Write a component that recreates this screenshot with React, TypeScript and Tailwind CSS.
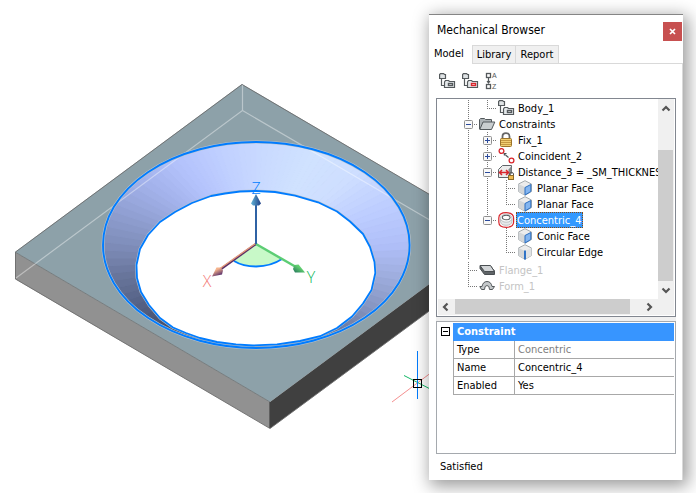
import React from "react";

const FONT = "font-['DejaVu_Sans_Condensed','DejaVu_Sans',sans-serif]";

/* ---------- model view ---------- */

type Stop = [number, number, number, number];

// Shading of the conic face, by clock angle in degrees.
const SHADE: Stop[] = [
  [0, 200, 216, 255],
  [30, 208, 226, 255],
  [50, 206, 222, 255],
  [70, 188, 204, 255],
  [85, 176, 191, 248],
  [100, 155, 170, 218],
  [115, 132, 147, 190],
  [130, 108, 122, 160],
  [145, 84, 96, 124],
  [180, 64, 72, 94],
  [230, 66, 76, 100],
  [248, 84, 97, 132],
  [262, 103, 116, 154],
  [275, 126, 140, 184],
  [290, 146, 161, 212],
  [305, 164, 179, 236],
  [322, 180, 195, 252],
  [340, 191, 207, 255],
  [360, 200, 216, 255],
];

function shadeAt(angle: number) {
  const i = Math.max(1, SHADE.findIndex((s) => s[0] >= angle));
  const a = SHADE[i - 1];
  const b = SHADE[i];
  const t = (angle - a[0]) / (b[0] - a[0]);
  const mix = (k: 1 | 2 | 3) => Math.round(a[k] + (b[k] - a[k]) * t);
  return `rgb(${mix(1)},${mix(2)},${mix(3)})`;
}

const wedges = Array.from({ length: 120 }, (_, i) => {
  const point = (deg: number) => {
    const r = (deg * Math.PI) / 180;
    return `${256 + 260 * Math.sin(r)},${258 - 260 * Math.cos(r)}`;
  };
  return { points: `256,258 ${point(i * 3)} ${point(i * 3 + 3)}`, fill: shadeAt(i * 3 + 1.5) };
});

const INNER =
  "256,191 240,191.5 225,193.5 211,196 192,203 175,212 160,222 148,235 140,249 136.5,265 137,278 141,292 149,305 160,318 173,327.5 186,333 200,338 217,342 236,344.3 253,345.5 277,344.3 300,341 320,336.2 337,328 352,316.5 363,303.5 371.5,290 375.3,273 374.5,262 370,247 363,234 350,221.5 337,211.5 318,202.3 295,195.7 275,192";

function ModelView() {
  return (
    <svg
      className="absolute left-0 top-0"
      width="696"
      height="493"
      viewBox="0 0 696 493"
      role="img"
      aria-label="Plate with conic hole"
    >
      <defs>
        <clipPath id="rim">
          <ellipse cx="256.300" cy="245" rx="153.300" ry="103" />
        </clipPath>
        <linearGradient id="zHead">
          <stop offset="0" stopColor="#62b4d8" />
          <stop offset="1" stopColor="#1f3f86" />
        </linearGradient>
        <linearGradient id="xHead" x1="0" y1="0" x2="0.6" y2="1">
          <stop offset="0.35" stopColor="#f6b48c" />
          <stop offset="1" stopColor="#4c2468" />
        </linearGradient>
        <linearGradient id="yHead" x1="0" y1="1" x2="1" y2="0">
          <stop offset="0" stopColor="#1f6f5a" />
          <stop offset="0.6" stopColor="#62d070" />
        </linearGradient>
      </defs>
      <polygon points="15,252 242,84 497,234 270,402" fill="#8da1a9" />
      <polygon points="15,252 270,402 270,428.500 15,279" fill="#919191" />
      <polygon points="270,402 497,234 497,261 270,428.500" fill="#404040" />
      <polygon
        points="15.500,279 15.500,252 242,84.500 497,234 497,261 270,428.500"
        fill="none"
        stroke="#6d6d6d"
        strokeWidth="0.900"
      />
      <path d="M15 252L270 402" stroke="#6f7678" strokeWidth="0.900" />
      <path d="M269.500 402V428" stroke="#5f5f5f" />
      <g clipPath="url(#rim)">
        {wedges.map((w, i) => (
          <polygon key={i} points={w.points} fill={w.fill} stroke={w.fill} strokeWidth="1" />
        ))}
      </g>
      <path d="M242.500 85V110.500L16 278M242.500 110.500L440 226" fill="none" stroke="#fff" strokeOpacity="0.4" strokeWidth="1.200" />
      <polygon points={INNER} fill="#fff" stroke="#b9c4cf" strokeWidth="2.800" strokeLinejoin="round" />
      <ellipse cx="256.300" cy="245" rx="153.300" ry="103" fill="none" stroke="#b9c4cf" strokeWidth="3" />
      <polygon points={INNER} fill="#fff" stroke="#007cff" strokeWidth="1.800" strokeLinejoin="round" />
      <ellipse cx="256.300" cy="245" rx="153.300" ry="103" fill="none" stroke="#007cff" strokeWidth="1.900" />

      <path d="M256 244L281.500 259Q271 266 256 266.500Q243 266.500 234 261Z" fill="#c8f9c8" />
      <path d="M282 259Q271 266.300 256 266.500Q243 266.500 234 261" fill="none" stroke="#007cff" strokeWidth="1.800" />
      <path d="M256 244L221 269" stroke="#5a2f66" strokeWidth="2.200" />
      <path d="M255.500 243.500L220 268.500" stroke="#e79c7c" strokeWidth="1.300" />
      <path d="M212 276.500L216.500 267.500L221 267.500L223 270.500L222 274.500Z" fill="url(#xHead)" />
      <path d="M256 244L296 267" stroke="#5ccd74" strokeWidth="2.400" />
      <path d="M305 272.500L298.500 264.500L294.500 265L293 269L295 272.500Z" fill="url(#yHead)" />
      <path d="M256 244V204" stroke="#2f62a4" strokeWidth="2" />
      <path d="M256 194L251 203.500L253 205.500H259L261 203.500Z" fill="url(#zHead)" />
      <g className="font-['Open_Sans',sans-serif] text-[16px] font-light" textAnchor="middle">
        <text x="256" y="194" fill="#007cff">Z</text>
        <text x="207" y="287" fill="#f47c78">X</text>
        <text x="311" y="283" fill="#10b85c">Y</text>
      </g>

      <path d="M392 402L440 366" stroke="#f58f8f" />
      <path d="M404 375.500L440 394" stroke="#12b866" />
      <path d="M417.500 351V399" stroke="#007cff" />
      <rect x="413.500" y="379.500" width="8" height="8" fill="none" stroke="#000" />
    </svg>
  );
}

/* ---------- icons ---------- */

function BodyIcon({ accent = "#54595c" }: { accent?: string }) {
  return (
    <svg width="18" height="16" viewBox="0 0 18 16" fill="none" stroke="#54595c" strokeWidth="1.200" aria-hidden="true">
      <path d="M.6 5.500V1.500L1.500.600H4.500L5.500 1.500H6.500V5.500Z" fill="#dfe3e5" />
      <path d="M2.500 6V12.500H5.500" />
      <path d="M5.500 14.500V9L6.500 7.500H9.500L10.500 8.500H15.500V14.500Z" fill="#e4e8ea" />
      <rect x="9.500" y="10.500" width="4" height="2" stroke={accent} strokeWidth="1.400" fill="#fff" />
    </svg>
  );
}

function SortIcon() {
  return (
    <svg width="18" height="18" viewBox="0 0 18 18" fill="none" stroke="#54595c" aria-hidden="true">
      <rect x="1.500" y="1.500" width="4" height="4" strokeWidth="1.300" />
      <rect x="1.500" y="12.500" width="4" height="4" strokeWidth="1.300" />
      <path d="M3.500 6V11M2 9L3.500 11L5 9" strokeWidth="1.200" />
      <g className="font-['Liberation_Sans',sans-serif] text-[7px]" fill="#54595c" stroke="none">
        <text x="7" y="6">A</text>
        <text x="7" y="17">Z</text>
      </g>
    </svg>
  );
}

function FolderIcon() {
  return (
    <svg width="17" height="16" viewBox="0 0 17 16" stroke="#53595c" aria-hidden="true">
      <path d="M.5 13V3.500L1.500 2.500H5.500L6.500 3.500H12.500V6" fill="#aeb4b7" />
      <path d="M.8 13.500L4 6H15.800L12.500 13.500Z" fill="#c9ced0" />
    </svg>
  );
}

function LockIcon() {
  return (
    <svg width="16" height="16" viewBox="0 0 16 16" aria-hidden="true">
      <path d="M4.500 7V4.500Q4.500 1.200 8 1.200T11.500 4.500V7" fill="none" stroke="#666" strokeWidth="1.800" />
      <rect x="2.500" y="6.500" width="11" height="8" rx="1" fill="#f2cf72" stroke="#9c742a" />
      <path d="M3 8.500H13M3 10.500H13M3 12.500H13" stroke="#b88a36" strokeWidth=".8" />
    </svg>
  );
}

function CoincidentIcon() {
  return (
    <svg width="17" height="16" viewBox="0 0 17 16" fill="none" aria-hidden="true">
      <circle cx="3.500" cy="3" r="2.400" stroke="#d9262c" strokeWidth="1.300" />
      <circle cx="13.500" cy="12.500" r="2.400" stroke="#d9262c" strokeWidth="1.300" />
      <path d="M7.500 7L10.500 9.500" stroke="#4d5457" strokeWidth="1.200" />
      <path d="M5.500 5H9L6 8Z" fill="#4d5457" />
    </svg>
  );
}

function DistanceIcon() {
  return (
    <svg width="17" height="16" viewBox="0 0 17 16" aria-hidden="true">
      <path d="M.5 5.500L4.500 1.500H13.500V9L10 13.500H.5Z" fill="#ececec" stroke="#60666a" />
      <path d="M10.500 13V5.500L13.500 2V9Z" fill="#858b8e" />
      <path d="M1.500 8.500H10.500M4 6L1.500 8.500L4 11M8 6L10.500 8.500L8 11" fill="none" stroke="#d9262c" strokeWidth="1.500" />
      <path d="M11.500 11.500V10Q11.500 8.500 13.500 8.500T15.500 10V11.500" fill="none" stroke="#555" />
      <rect x="10.500" y="11.500" width="5" height="4" fill="#f0bc50" stroke="#8c6a28" />
    </svg>
  );
}

function FaceIcon() {
  return (
    <svg width="16" height="16" viewBox="0 0 16 16" strokeLinejoin="round" aria-hidden="true">
      <path d="M1.500 4L8 .700L14.500 4V11.500L8 15.300L1.500 11.500Z" fill="#ececec" stroke="#a5abae" />
      <path d="M1.500 4L8 7V15.300L1.500 11.500Z" fill="#d3d6d8" />
      <path d="M8 7.500L13.800 4.500V11.500L8 15Z" fill="#83b5f0" stroke="#2c6fc0" />
    </svg>
  );
}

function EdgeIcon() {
  return (
    <svg width="16" height="16" viewBox="0 0 16 16" strokeLinejoin="round" aria-hidden="true">
      <path d="M1.500 4L8 .700L14.500 4V11.500L8 15.300L1.500 11.500Z" fill="#ececec" stroke="#a5abae" />
      <path d="M1.500 4L8 7V15.300L1.500 11.500Z" fill="#d3d6d8" />
      <path d="M14.500 4L8 7V15.300L14.500 11.500Z" fill="#dfe2e4" />
      <path d="M8 6.500V15.500" stroke="#1c68c4" strokeWidth="1.800" />
    </svg>
  );
}

function ConcentricIcon() {
  return (
    <svg width="17" height="16" viewBox="0 0 17 16" aria-hidden="true">
      <path d="M.8 6Q.8 .700 8.200 .700T15.600 6V10Q15.600 15.300 8.200 15.300T.8 10Z" fill="#fbfbfb" stroke="#d9262c" strokeWidth="1.200" />
      <path d="M2.500 6.500V9.500Q3 13.300 8.200 13.300T14 9.500V6.500" fill="#e6e8e9" stroke="#a8adb0" strokeWidth=".7" />
      <ellipse cx="8.200" cy="6.200" rx="5.800" ry="4" fill="#fafafa" stroke="#a8adb0" strokeWidth=".7" />
      <ellipse cx="8.200" cy="5.500" rx="3.900" ry="2.300" fill="#fff" stroke="#5a6063" strokeWidth="1.100" />
    </svg>
  );
}

function FlangeIcon() {
  return (
    <svg width="17" height="16" viewBox="0 0 17 16" stroke="#4a4f52" strokeLinejoin="round" aria-hidden="true">
      <path d="M1 4H11.500L15.500 9V12.500H5.500L1 6.500Z" fill="#5f6467" />
      <path d="M1 3.500H11.500L15.500 9.500H5.500Z" fill="#d2d5d7" />
    </svg>
  );
}

function FormIcon() {
  return (
    <svg width="17" height="16" viewBox="0 0 17 16" stroke="#53585b" strokeLinejoin="round" aria-hidden="true">
      <path d="M.8 8.500H3Q4 3.500 8 3.500T13 8.500H15.500L13.500 11.500H10.500Q10.500 7.500 8 7.500T5.500 11.500H2.500Z" fill="#c4c8ca" />
    </svg>
  );
}

function Arrow({ turn }: { turn: "up" | "down" | "left" | "right" }) {
  const d = {
    up: "M4.500 9.500L8 6L11.500 9.500",
    down: "M4.500 6.500L8 10L11.500 6.500",
    left: "M9.500 4.500L6 8L9.500 11.500",
    right: "M6.500 4.500L10 8L6.500 11.500",
  }[turn];
  return (
    <svg className="block" width="16" height="16" viewBox="0 0 16 16" aria-hidden="true">
      <path d={d} fill="none" stroke="#555" strokeWidth="2.200" />
    </svg>
  );
}

/* ---------- tree ---------- */

type Guide = "line" | "tee" | "elbow" | "blank";

interface Node {
  label: string;
  icon: React.ReactNode;
  guides: Guide[];
  box?: "plus" | "minus";
  selected?: boolean;
  dim?: boolean;
}

const NODES: Node[] = [
  { label: "Body_1", icon: <BodyIcon />, guides: ["line", "elbow"] },
  { label: "Constraints", icon: <FolderIcon />, guides: ["tee"], box: "minus" },
  { label: "Fix_1", icon: <LockIcon />, guides: ["line", "tee"], box: "plus" },
  { label: "Coincident_2", icon: <CoincidentIcon />, guides: ["line", "tee"], box: "plus" },
  { label: "Distance_3 = _SM_THICKNESS", icon: <DistanceIcon />, guides: ["line", "tee"], box: "minus" },
  { label: "Planar Face", icon: <FaceIcon />, guides: ["line", "line", "tee"] },
  { label: "Planar Face", icon: <FaceIcon />, guides: ["line", "line", "elbow"] },
  { label: "Concentric_4", icon: <ConcentricIcon />, guides: ["line", "elbow"], box: "minus", selected: true },
  { label: "Conic Face", icon: <FaceIcon />, guides: ["line", "blank", "tee"] },
  { label: "Circular Edge", icon: <EdgeIcon />, guides: ["line", "blank", "elbow"] },
  { label: "Flange_1", icon: <FlangeIcon />, guides: ["tee"], dim: true },
  { label: "Form_1", icon: <FormIcon />, guides: ["elbow"], dim: true },
];

function GuideCell({ kind, box }: { kind: Guide; box?: "plus" | "minus" }) {
  return (
    <svg className="shrink-0" width="19" height="16" viewBox="0 0 19 16" fill="none" stroke="#777" aria-hidden="true">
      {kind !== "blank" && <path d={kind === "elbow" ? "M9.500 0V9" : "M9.500 0V16"} strokeDasharray="1 1" />}
      {(kind === "tee" || kind === "elbow") && <path d="M9 8.500H19" strokeDasharray="1 1" />}
      {box && (
        <>
          <rect x="5.500" y="4.500" width="8" height="8" rx="1" fill="#f8f8f8" stroke="#8f8f8f" />
          <path d={box === "plus" ? "M7 8.500H12M9.500 6V11" : "M7 8.500H12"} stroke="#2a4a9c" />
        </>
      )}
    </svg>
  );
}

function TreeRow({ node }: { node: Node }) {
  return (
    <li
      role="treeitem"
      aria-level={node.guides.length}
      aria-selected={!!node.selected}
      aria-expanded={node.box ? node.box === "minus" : undefined}
      className={`flex h-4 items-start whitespace-nowrap ${node.label === "Flange_1" ? "mt-0.5" : ""}`}
    >
      {node.guides.map((g, i) => (
        <GuideCell key={i} kind={g} box={i === node.guides.length - 1 ? node.box : undefined} />
      ))}
      <span className="ml-px flex w-[18px] shrink-0">{node.icon}</span>
      <span
        className={
          node.selected
            ? "h-4 border border-dotted border-[#8a4a10] bg-[#3399ff] pr-px leading-4 text-white"
            : `px-0.5 leading-[18px] ${node.dim ? "text-[#c4c4c4]" : "text-black"}`
        }
      >
        {node.label}
      </span>
    </li>
  );
}

function Tree() {
  return (
    <div className="mx-[7px] border border-[#828790] bg-white p-px pt-0">
      <div className="flex">
        <ul role="tree" aria-label="Model" className="min-w-0 flex-1 overflow-hidden pb-[5px] pl-[21px] pt-px">
          {NODES.map((n, i) => (
            <TreeRow key={i} node={n} />
          ))}
        </ul>
        <div className="flex w-4 flex-col bg-[#f0f0f0]">
          <button type="button" aria-label="Scroll up" className="h-[51px]">
            <span className="block h-full pt-0.5"><Arrow turn="up" /></span>
          </button>
          <div className="mr-px flex-1 bg-[#cdcdcd]" />
          <button type="button" aria-label="Scroll down" className="h-[18px]">
            <Arrow turn="down" />
          </button>
        </div>
      </div>
      <div className="flex h-4 bg-[#f0f0f0]">
        <button type="button" aria-label="Scroll left" className="w-[17px]">
          <Arrow turn="left" />
        </button>
        <div className="mb-px flex-1 bg-[#cdcdcd]" />
        <button type="button" aria-label="Scroll right" className="w-11 pl-[11px]">
          <Arrow turn="right" />
        </button>
      </div>
    </div>
  );
}

/* ---------- property grid ---------- */

const PROPS = [
  { name: "Type", value: "Concentric", dim: true },
  { name: "Name", value: "Concentric_4", dim: false },
  { name: "Enabled", value: "Yes", dim: false },
];

function PropertyGrid() {
  return (
    <div className="mx-[7px] flex items-start border border-[#a5a9ae] bg-white pb-[58px] pr-px pt-px">
      <button
        type="button"
        aria-label="Collapse Constraint"
        className="ml-1 mr-[3px] mt-1 h-[9px] w-[9px] shrink-0"
      >
        <svg className="block" width="9" height="9" viewBox="0 0 9 9" fill="none" stroke="#000" aria-hidden="true">
          <rect x=".5" y=".5" width="8" height="8" />
          <path d="M2 4.500H7" />
        </svg>
      </button>
      <table className="flex-1 table-fixed border-separate border-spacing-0 text-left">
        <thead>
          <tr>
            <th colSpan={2} className="h-[18px] bg-[#3795ff] p-0 pl-1 font-bold leading-4 text-white">
              Constraint
            </th>
          </tr>
        </thead>
        <tbody>
          {PROPS.map((p) => (
            <tr key={p.name}>
              <th
                scope="row"
                className="h-[18px] w-[62px] border-x border-b border-[#a8a8a8] p-0 pl-[3px] font-normal leading-4"
              >
                {p.name}
              </th>
              <td className={`h-[18px] border-b border-[#a8a8a8] p-0 pl-[3px] leading-4 ${p.dim ? "text-[#808080]" : ""}`}>
                {p.value}
              </td>
            </tr>
          ))}
        </tbody>
      </table>
    </div>
  );
}

/* ---------- panel ---------- */

function MechanicalBrowser() {
  return (
    <section
      aria-label="Mechanical Browser"
      className="relative w-[254px] border-t border-[#858585] bg-white text-[11px] text-black shadow-[3px_4px_16px_2px_rgba(0,0,0,0.4)]"
    >
      <header className="flex h-[30px] items-start justify-between pl-2 pr-px pt-[7px]">
        <h1 className="text-[12px] leading-4">Mechanical Browser</h1>
        <button
          type="button"
          aria-label="Close"
          className="flex h-[19px] w-[19px] items-center justify-center bg-[#c75050]"
        >
          <svg width="7" height="7" viewBox="0 0 7 7" aria-hidden="true">
            <path d="M1 1L6 6M6 1L1 6" stroke="#fff" strokeWidth="1.700" />
          </svg>
        </button>
      </header>

      <div role="tablist" className="flex h-[19px]">
        <button type="button" role="tab" aria-selected="true" className="w-[43px] pb-0.5 pl-[5px] text-left leading-4">
          Model
        </button>
        <div className="flex flex-1 border-b border-[#d9d9d9]">
          <button type="button" role="tab" aria-selected="false" className="w-[43px] border-l border-t border-[#d9d9d9] bg-[#f0f0f0] pt-px leading-4">
            Library
          </button>
          <button type="button" role="tab" aria-selected="false" className="w-[44px] border-x border-t border-[#d9d9d9] bg-[#f0f0f0] pt-px leading-4">
            Report
          </button>
        </div>
      </div>

      <div className="border-r border-[#d9d9d9]">
        <div role="toolbar" aria-label="Tree display" className="flex gap-[5px] px-[10px] py-2">
          <button type="button" aria-label="Show bodies" className="h-[18px] w-[18px]">
            <BodyIcon />
          </button>
          <button type="button" aria-label="Show hidden bodies" className="h-[18px] w-[18px]">
            <BodyIcon accent="#d9262c" />
          </button>
          <button type="button" aria-label="Sort by name" className="h-[18px] w-[18px]">
            <SortIcon />
          </button>
        </div>
        <div className="-mr-px">
          <Tree />
          <div className="mx-[7px] h-1 bg-[#f0f0f0]" />
          <PropertyGrid />
        </div>
        <p className="px-[11px] py-1 leading-[18px]">Satisfied</p>
      </div>
    </section>
  );
}

export default function App() {
  return (
    <main className={`relative flex min-h-screen items-start justify-end overflow-hidden bg-white pb-[13px] pr-[13px] pt-[14px] ${FONT}`}>
      <ModelView />
      <MechanicalBrowser />
    </main>
  );
}
